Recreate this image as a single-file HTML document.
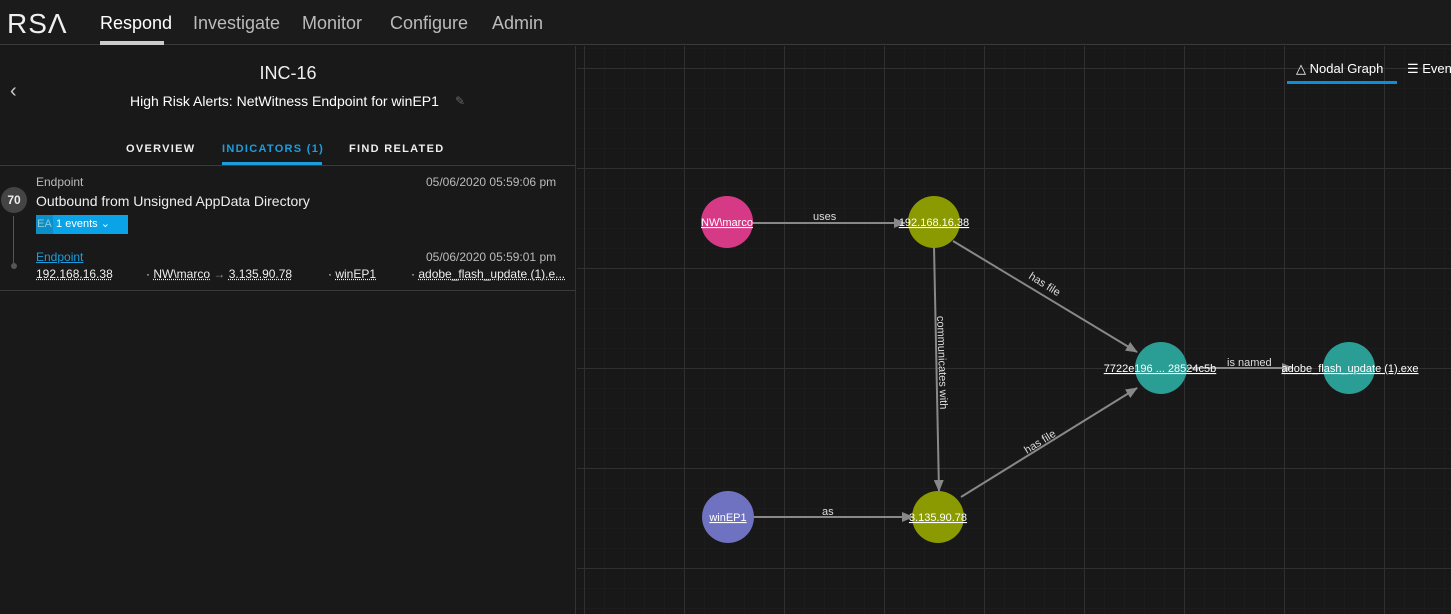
<!DOCTYPE html>
<html><head><style>
*{margin:0;padding:0;box-sizing:border-box}
body{width:1451px;height:614px;background:#181818;font-family:"Liberation Sans",sans-serif;color:#ddd;overflow:hidden;position:relative}
.nav{position:absolute;left:0;top:0;width:1451px;height:45px;background:#1b1b1b;border-bottom:1px solid #3a3a3a}
.nav .logo{position:absolute;left:7px;top:8px;font-size:28px;color:#eee;letter-spacing:1px}
.nav a{position:absolute;top:13px;font-size:18px;color:#bbb}
.left{position:absolute;left:0;top:46px;width:576px;height:568px;background:#191919;border-right:1px solid #333}
.abs{position:absolute}
.tab{position:absolute;top:143px;font-size:11px;font-weight:bold;letter-spacing:1.3px;color:#eee}
u{text-decoration:underline dotted}
</style></head><body>
<div class="nav">
<div class="logo">RSΛ</div>
<a style="left:100px;color:#fff">Respond</a>
<div class="abs" style="left:100px;top:41px;width:64px;height:4px;background:#ccc"></div>
<a style="left:193px">Investigate</a>
<a style="left:302px">Monitor</a>
<a style="left:390px">Configure</a>
<a style="left:492px">Admin</a>
</div>
<div class="left">
<div class="abs" style="left:10px;top:34px;font-size:20px;color:#ccc">&#8249;</div>
<div class="abs" style="left:0;width:576px;top:17px;text-align:center;font-size:18px;color:#eee">INC-16</div>
<div class="abs" style="left:130px;top:47px;font-size:14px;color:#fff">High Risk Alerts: NetWitness Endpoint for winEP1</div>
<div class="abs" style="left:455px;top:48px;font-size:12px;color:#666">&#9998;</div>
<div class="tab" style="left:126px;top:97px">OVERVIEW</div>
<div class="tab" style="left:222px;top:97px;color:#1b9ee0">INDICATORS (1)</div>
<div class="abs" style="left:222px;top:116px;width:100px;height:3px;background:#1b9ee0"></div>
<div class="tab" style="left:349px;top:97px">FIND RELATED</div>
<div class="abs" style="left:0;top:119px;width:576px;height:1px;background:#3a3a3a"></div>
<div class="abs" style="left:13px;top:170px;width:1px;height:50px;background:#555"></div>
<div class="abs" style="left:1px;top:141px;width:26px;height:26px;border-radius:50%;background:#444;color:#eee;font-size:12px;font-weight:bold;text-align:center;line-height:26px">70</div>
<div class="abs" style="left:11px;top:217px;width:6px;height:6px;border-radius:50%;background:#555"></div>
<div class="abs" style="left:36px;top:129px;font-size:12px;color:#bbb">Endpoint</div>
<div class="abs" style="left:426px;top:129px;font-size:12px;color:#bbb">05/06/2020 05:59:06 pm</div>
<div class="abs" style="left:36px;top:147px;font-size:14px;color:#eee">Outbound from Unsigned AppData Directory</div>
<div class="abs" style="left:36px;top:169px;width:92px;height:19px;background:#0aa3e8;font-size:11px;color:#fff;line-height:19px"><span style="display:inline-block;background:#0d8ec9;width:17px;text-align:center;color:#8cd">EA</span> 1 events &#8964;</div>
<div class="abs" style="left:36px;top:204px;font-size:12px;color:#1b9ee0;text-decoration:underline">Endpoint</div>
<div class="abs" style="left:426px;top:204px;font-size:12px;color:#bbb">05/06/2020 05:59:01 pm</div>
<div class="abs" style="left:36px;top:221px;font-size:12px;color:#eee;white-space:nowrap"><u>192.168.16.38</u></div>
<div class="abs" style="left:146px;top:221px;font-size:12px;color:#eee;white-space:nowrap">· <u>NW\marco</u> <span style="color:#888">&#8594;</span> <u>3.135.90.78</u></div>
<div class="abs" style="left:328px;top:221px;font-size:12px;color:#eee">· <u>winEP1</u></div>
<div class="abs" style="left:411px;top:221px;font-size:12px;color:#eee;white-space:nowrap">· <u>adobe_flash_update (1).e...</u></div>
<div class="abs" style="left:0;top:244px;width:576px;height:1px;background:#3a3a3a"></div>
</div>
<svg class="abs" style="left:577px;top:46px" width="874" height="568">
<defs>
<pattern id="m" width="20" height="20" patternUnits="userSpaceOnUse" x="7" y="2"><path d="M0 0H20M0 0V20" stroke="#1f1f1f" stroke-width="1"/></pattern>
<pattern id="M" width="100" height="100" patternUnits="userSpaceOnUse" x="7" y="22"><path d="M0 0.5H100M0.5 0V100" stroke="#303030" stroke-width="1"/></pattern>
<marker id="a" markerUnits="userSpaceOnUse" markerWidth="12" markerHeight="10" refX="11" refY="5" orient="auto"><path d="M0 0L12 5L0 10z" fill="#888"/></marker>
</defs>
<rect width="874" height="568" fill="#181818"/>
<rect width="874" height="568" fill="url(#m)"/>
<rect width="874" height="568" fill="url(#M)"/>
<g stroke="#888" stroke-width="2" fill="none" marker-end="url(#a)">
<line x1="176" y1="177" x2="328" y2="177"/>
<line x1="357" y1="200" x2="362" y2="445"/>
<line x1="376" y1="195" x2="560" y2="306"/>
<line x1="384" y1="451" x2="560" y2="342"/>
<line x1="176" y1="471" x2="336" y2="471"/>
<line x1="610" y1="322" x2="716" y2="322"/>
</g>
<g font-size="11" fill="#ddd" font-family="Liberation Sans,sans-serif">
<text x="236" y="174">uses</text>
<text x="245" y="469">as</text>
<text x="650" y="320">is named</text>
<text transform="translate(360,270) rotate(88)">communicates with</text>
<text transform="translate(451,232) rotate(32)">has file</text>
<text transform="translate(450,408) rotate(-32)">has file</text>
</g>
<circle cx="150" cy="176" r="26" fill="#d63a87"/>
<circle cx="357" cy="176" r="26" fill="#8a9a00"/>
<circle cx="584" cy="322" r="26" fill="#2a9d94"/>
<circle cx="772" cy="322" r="26" fill="#2a9d94"/>
<circle cx="151" cy="471" r="26" fill="#6e72c0"/>
<circle cx="361" cy="471" r="26" fill="#8a9a00"/>
<g font-size="11" fill="#fff" text-anchor="middle" text-decoration="underline" font-family="Liberation Sans,sans-serif">
<text x="150" y="180">NW\marco</text>
<text x="357" y="180">192.168.16.38</text>
<text x="583" y="326">7722e196 ... 28524c5b</text>
<text x="773" y="326">adobe_flash_update (1).exe</text>
<text x="151" y="475">winEP1</text>
<text x="361" y="475">3.135.90.78</text>
</g>
<g font-size="13" fill="#fff" font-family="Liberation Sans,sans-serif">
<text x="719" y="27">&#9651; Nodal Graph</text>
<text x="830" y="27">&#9776; Events</text>
</g>
<rect x="710" y="35" width="110" height="3" fill="#0a90d8"/>
</svg>
</body></html>
